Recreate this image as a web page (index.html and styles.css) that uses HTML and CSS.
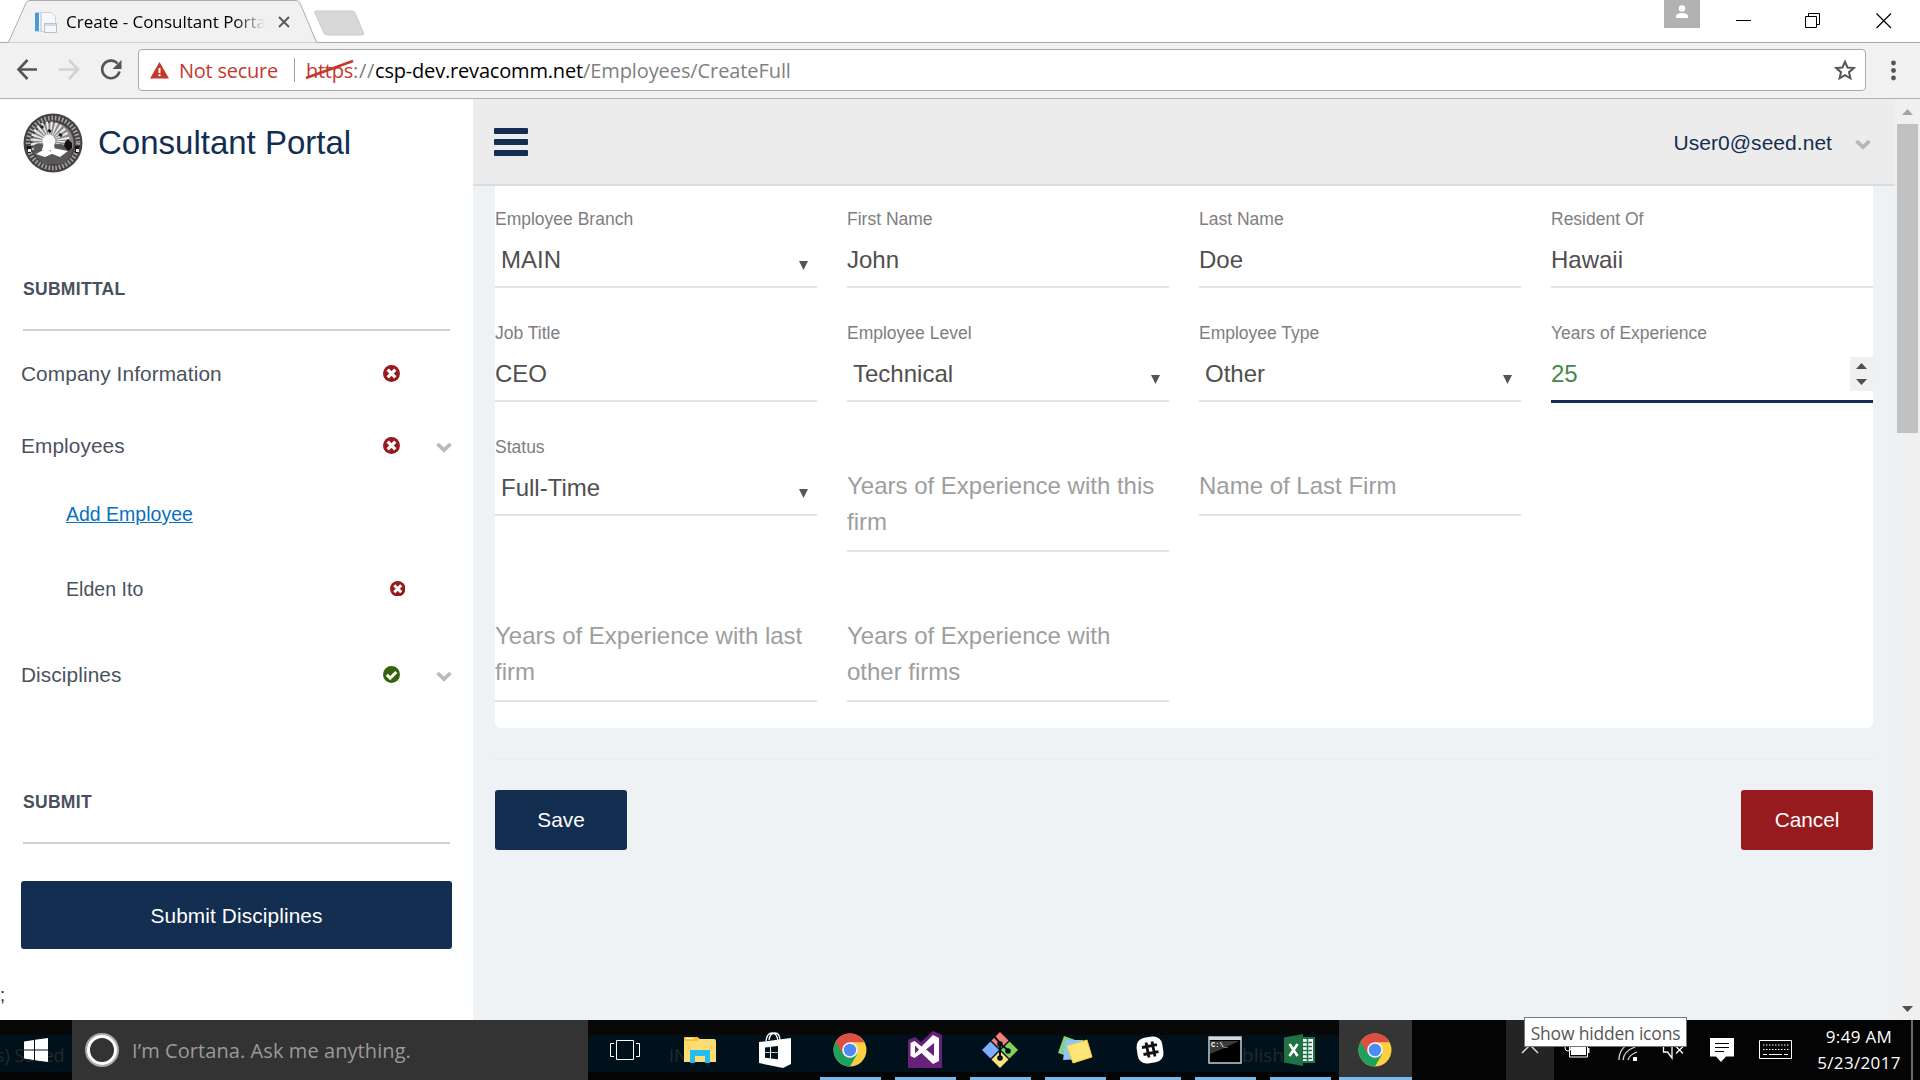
FILE: index.html
```html
<!DOCTYPE html>
<html lang="en">
<head>
<meta charset="utf-8">
<title>Create - Consultant Portal</title>
<link rel="stylesheet" href="styles.css">
</head>
<body>
<svg class="defs" aria-hidden="true">
  <symbol id="bad" viewBox="0 0 17 17"><circle cx="8.5" cy="8.5" r="8.5" fill="#971b1e"/><path d="M4.700 4.700l7.600 7.600M12.300 4.700l-7.600 7.600" stroke="#fff" stroke-width="3.300"/></symbol>
  <symbol id="good" viewBox="0 0 17 17"><circle cx="8.5" cy="8.5" r="8.5" fill="#36620c"/><path d="M3.8 8.9l3.4 3.2 6.1-6.2" fill="none" stroke="#fff" stroke-width="2.9"/></symbol>
  <symbol id="chev" viewBox="0 0 16 11"><path d="M1.5 2l6.500 6.200L14.500 2" fill="none" stroke="currentColor" stroke-width="3.8"/></symbol>
  <symbol id="arrow" viewBox="0 0 9 9"><path d="M0 0h9L4.500 9z" fill="#555"/></symbol>
  <symbol id="chrome" viewBox="0 0 34 34">
    <circle cx="17" cy="17" r="16.500" fill="#fdd044"/>
    <path d="M17 17L2.700 8.800A16.500 16.500 0 0 0 17 33.500L24.300 21z" fill="#1fa05f"/>
    <path d="M17 9.200h14.500A16.500 16.500 0 0 0 2.700 8.800L10 21z" fill="#dd4f43"/>
    <circle cx="17" cy="17" r="7.800" fill="#f4f4f4"/><circle cx="17" cy="17" r="6.200" fill="#4b8bf5"/>
  </symbol>
</svg>

<header class="tabstrip">
  <div class="tab">
    <svg class="tab-shape" width="322" height="43"><path d="M0 42.500H7Q8.500 42.500 9.500 40L26 3Q27 .5 30 .5H296Q298.500 .5 300 3L315.500 40Q316.500 42.500 318 42.500H322V43H0z" fill="#f1f1f1" stroke="#acacac"/></svg>
    <svg class="favicon" width="24" height="24"><path d="M2.500 2.500h16l4 4v15h-20z" fill="#f6f8fb" stroke="#ccd3dc"/><path d="M2 3h4v18h-4z" fill="#4a9bd4"/><path d="M8 3v18" stroke="#cbdcec" stroke-width="2"/><path d="M11.500 13.500h12v9h-12z" fill="#f5f7fa" stroke="#b6c1cf"/><path d="M12 14h11v2H12z" fill="#d3dce8"/></svg>
    <span class="tab-title">Create - Consultant Portal</span>
    <svg class="tab-close" width="12" height="12"><path d="M1 1l10 10M11 1L1 11" stroke="#5a5a5a" stroke-width="2"/></svg>
  </div>
  <svg class="newtab" width="51" height="26"><path d="M2 1h36q2 0 3 2l8.500 20q.5 2-2 2H14q-3 0-4-2L1 3q-.5-2 1-2z" fill="#d8d8d8" stroke="#c8c8c8"/></svg>
  <div class="person"><svg width="14" height="14"><circle cx="7" cy="3.500" r="3.200" fill="#fff"/><path d="M1 13V10.500Q2 8 7 8t6 2.500V13z" fill="#fff"/></svg></div>
  <svg class="winbtns" width="184" height="43"><path d="M0 20.500h15M69.500 16.500h11v11h-11zM72.500 16V13.500h11v11h-3" fill="none" stroke="#000"/><path d="M140.500 13.500l14.500 14.500M155 13.500L140.500 28" stroke="#000" stroke-width="1.200"/></svg>
</header>

<div class="toolbar">
  <svg class="nav" width="138" height="54" fill="none" stroke-width="2.600">
    <path d="M37 26.500H19M27.500 17l-9 9.500 9 9.500" stroke="#555"/>
    <path d="M59 26.500h18M69 17l9 9.500-9 9.500" stroke="#d2d2d2"/>
    <path d="M117.500 20.500a8.800 8.800 0 1 0 2 8" stroke="#555"/><path d="M121.500 17v9h-9z" fill="#555"/>
  </svg>
  <div class="omnibox">
    <svg width="19" height="17"><path d="M9.500 0L19 16.500H0z" fill="#c5392b"/><path d="M9.500 6v5M9.500 12.300v2" stroke="#fff" stroke-width="2"/></svg>
    <span class="insecure">Not secure</span>
    <span class="sep"></span>
    <span class="scheme">https<svg class="strike" width="50" height="22"><path d="M1 19L48 2" stroke="#c5392b" stroke-width="2.800"/></svg></span><span class="grey slashes">://</span><span class="host">csp-dev.revacomm.net</span><span class="grey">/Employees/CreateFull</span>
    <svg class="star" width="22" height="22"><path d="M11 2.800l2.500 5.700 6.200.6-4.700 4.100 1.400 6.100L11 16.100l-5.400 3.200L7 13.200 2.300 9.100l6.200-.6z" fill="none" stroke="#555" stroke-width="2"/></svg>
  </div>
  <svg class="menu" width="54" height="54" fill="#555"><circle cx="27.500" cy="20" r="2.400"/><circle cx="27.500" cy="27.500" r="2.400"/><circle cx="27.500" cy="35" r="2.400"/></svg>
</div>

<div class="page">
  <aside class="sidebar">
    <div class="brand">
      <svg class="seal" width="60" height="60" viewBox="0 0 60 60">
        <circle cx="30" cy="30" r="29.500" fill="#474344"/>
        <circle cx="30" cy="30" r="25" fill="none" stroke="#a5a3a3" stroke-width="4.500" stroke-dasharray="1.600 1.900"/>
        <circle cx="30" cy="30" r="20.500" fill="#8a8888"/>
        <circle cx="27" cy="28" r="13" fill="none" stroke="#e8e8e8" stroke-width="13" stroke-dasharray="1.700 1.700"/>
        <path d="M10 33q5-5 11-1l17-1 12 5q-3 12-12 15H22Q11 45 10 33z" fill="#5a5757"/>
        <circle cx="26" cy="28" r="6.500" fill="#fafafa"/>
        <path d="M21 30l10 1 1 7-13-1zM13 41l9-5 9 4-9 4zM30 35l15 3-8 6-10-4z" fill="#fff"/>
        <path d="M42 29l3-3 4 4v5l-4 3-4-5z" fill="#161214"/><path d="M18 13l2 2M25 17l3 2M36 21l3 2" stroke="#222" stroke-width="3"/>
        <path d="M3 33h5v7H5zM52 33h5l-2 7h-3z" fill="#151515"/><path d="M5 36h3v3H5zM53 36h3v3h-3z" fill="#eee"/>
      </svg>
      <span>Consultant Portal</span>
    </div>
    <h2 class="section first">SUBMITTAL</h2>
    <nav class="menu-list">
      <a class="item"><span>Company Information</span><svg class="status" width="17" height="17"><use href="#bad"/></svg></a>
      <a class="item"><span>Employees</span><svg class="status" width="17" height="17"><use href="#bad"/></svg><svg class="chev" width="16" height="11"><use href="#chev"/></svg></a>
      <a class="sub add">Add Employee</a>
      <a class="sub person-row"><span>Elden Ito</span><svg class="status" width="15.500" height="15.500"><use href="#bad"/></svg></a>
      <a class="item last"><span>Disciplines</span><svg class="status" width="17" height="17"><use href="#good"/></svg><svg class="chev" width="16" height="11"><use href="#chev"/></svg></a>
    </nav>
    <h2 class="section">SUBMIT</h2>
    <button class="submit">Submit Disciplines</button>
    <p class="stray">;</p>
  </aside>

  <main class="main">
    <div class="topbar">
      <div class="burger"><i></i><i></i><i></i></div>
      <span class="user">User0@seed.net</span>
      <svg class="chev" width="16" height="11"><use href="#chev"/></svg>
    </div>
    <form class="card">
      <div class="field select"><label>Employee Branch</label><div class="value">MAIN<svg width="9" height="9"><use href="#arrow"/></svg></div></div>
      <div class="field"><label>First Name</label><div class="value">John</div></div>
      <div class="field"><label>Last Name</label><div class="value">Doe</div></div>
      <div class="field"><label>Resident Of</label><div class="value">Hawaii</div></div>
      <div class="field"><label>Job Title</label><div class="value">CEO</div></div>
      <div class="field select"><label>Employee Level</label><div class="value">Technical<svg width="9" height="9"><use href="#arrow"/></svg></div></div>
      <div class="field select"><label>Employee Type</label><div class="value">Other<svg width="9" height="9"><use href="#arrow"/></svg></div></div>
      <div class="field focus"><label>Years of Experience</label><div class="value">25<svg class="spin" width="23" height="34"><path d="M0 0h23v34H0z" fill="#f0f0f0"/><path d="M6 12l5.500-6 5.500 6zM6 22h11l-5.500 6z" fill="#505050"/></svg></div></div>
      <div class="field select"><label>Status</label><div class="value">Full-Time<svg width="9" height="9"><use href="#arrow"/></svg></div></div>
      <div class="field empty">Years of Experience with this firm</div>
      <div class="field empty">Name of Last Firm</div>
      <div></div>
      <div class="field empty">Years of Experience with last firm</div>
      <div class="field empty">Years of Experience with other firms</div>
    </form>
    <hr class="rule">
    <div class="actions"><button class="save">Save</button><button class="cancel">Cancel</button></div>
  </main>

  <div class="scrollbar">
    <svg width="25" height="25"><path d="M7 16l5.500-6 5.500 6z" fill="#a3a3a3"/></svg>
    <div class="thumb"></div>
    <svg class="down" width="25" height="25"><path d="M7 11h11l-5.500 6z" fill="#505050"/></svg>
  </div>
</div>

<footer class="taskbar">
  <div class="backdrop"></div>
  <span class="ghost g1">s) Saved</span><span class="ghost g2">IN</span><span class="ghost g3">Publish</span>
  <div class="start"><svg width="24" height="24" fill="#fff"><path d="M0 3.500L10 2v9.500H0zM11 1.800L24 0v11.500H11zM0 12.500h10V22L0 20.500zM11 12.500h13V24l-13-1.800z"/></svg></div>
  <div class="cortana"><svg width="34" height="34"><circle cx="17" cy="17" r="15.500" fill="none" stroke="#aaa" stroke-width="3"/><circle cx="17" cy="17" r="13.500" fill="none" stroke="#fff" stroke-width="3"/></svg><span>I’m Cortana. Ask me anything.</span></div>
  <div class="apps">
    <div class="app tv"><svg width="32" height="22" fill="none" stroke="#fff"><path d="M7.500 1.500h17v19h-17zM5 4.500H1.500v13H5M27 4.500h3.500v13H27" /></svg></div>
    <div class="app"><svg width="34" height="34"><path d="M1 5q0-1 1-1h12l3 2h14q2 0 2 2v21H1z" fill="#ffdc71"/><path d="M1 5q0-1 1-1h12l2 2-2 2H1z" fill="#fbc02b"/><path d="M3 5.500h7" stroke="#fff"/><path d="M7 17h20v13h-5v-7H12v7H7z" fill="#23bdf3"/></svg></div>
    <div class="app"><svg width="34" height="38"><path d="M8 10Q9 2 14 2t6 8M11 9q1-7 6-7t5 8" fill="none" stroke="#fff" stroke-width="1.300"/><path d="M1 11l32-4v26l-8 4L1 32z" fill="#fff"/><path d="M7 16.500l5-.6v5.300H7zM13 15.800l7-.8v6.200h-7zM7 22h5v5.300l-5-.6zM13 22h7v6.200l-7-.8z" fill="#00111b"/></svg></div>
    <div class="app run"><svg width="34" height="34"><use href="#chrome"/></svg></div>
    <div class="app run"><svg width="36" height="38"><path d="M1 9l7-3 6 5L26 0l9 4v33H1z" fill="#68217a"/><path d="M3.500 12l4-2 7 5.500L26 4l6 3v23l-6 3-11.500-11L7.500 27l-4-2zM8 14.500v8l4-4zM27 12l-8 6.500 8 6.500z" fill="#fff" fill-rule="evenodd"/></svg></div>
    <div class="app run"><svg width="38" height="38"><path d="M10.500 9.500L19 1l8.500 8.500L19 18z" fill="#f98078"/><path d="M1 19l8.500-8.500L18 19l-8.500 8.500z" fill="#7eaeff"/><path d="M20 19l8.500-8.500L37 19l-8.500 8.500z" fill="#84d15c"/><path d="M10.500 28.500L19 20l8.500 8.500L19 37z" fill="#ffe27b"/><path d="M13 5l6 7v14M19 13l8 6" fill="none" stroke="#00111b" stroke-width="2"/><circle cx="19" cy="27" r="2.800" fill="#00111b"/><circle cx="27" cy="20" r="2.800" fill="#00111b"/><circle cx="19" cy="13" r="2.800" fill="#00111b"/></svg></div>
    <div class="app run"><svg width="36" height="30"><path d="M7 1l14 5-5 17L1 18z" fill="#87d186"/><path d="M9 5h17v19L6 25z" fill="#8dc6f7"/><path d="M10 11l20-6 5 17-19 6z" fill="#fde577" stroke="#f4cf45"/></svg></div>
    <div class="app run"><svg width="30" height="30"><rect x="2" y="2" width="26" height="26" rx="9" fill="#fff" transform="rotate(-8 15 15)"/><path d="M11 7.500l3 15M17 6.500l3 15M7 12.500l15-2.800M8.500 19.500l15-2.800" stroke="#111" stroke-width="2.800"/></svg></div>
    <div class="app run"><svg width="34" height="28"><path d="M1 1h32v26H1z" stroke="#c7cbd0" stroke-width="1.500"/><path d="M1 1h32v3H1z" fill="#d5dae1"/><path d="M2 5h29L16 12 2 18z" fill="#3a3a3a"/><text x="3" y="11" class="cmd">C:\_</text></svg></div>
    <div class="app run"><svg width="34" height="34"><path d="M18 5h13v24H18z" fill="#fff" stroke="#21734a" stroke-width="2"/><path d="M20 9.500h9M20 13.500h9M20 17.500h9M20 21.500h9M20 25.500h9M24.500 6v22" stroke="#21734a" stroke-width="1.500"/><path d="M1 4.500L20 1v32L1 29.500z" fill="#207245"/><path d="M6.500 11l8 12M14.500 11l-8 12" stroke="#fff" stroke-width="2.600"/></svg></div>
    <div class="app active"><svg width="34" height="34"><use href="#chrome"/></svg></div>
  </div>
  <div class="tray">
    <div class="hidden-icons"><svg width="20" height="12"><path d="M2 10l8-8 8 8" fill="none" stroke="#ddd" stroke-width="1.500"/></svg></div>
    <svg class="sys" width="160" height="60" fill="none" stroke="#fff"><path d="M15.500 20h18v17h-18z"/><path d="M17 20h15v15H17z" fill="#fff" stroke="none"/><path d="M34.500 28v5" stroke-width="2"/><circle cx="14" cy="28" r="3"/><path d="M65 40q0-13 13-17M69 40q1-9 12-13M74 40q1-5 9-8" stroke="#ddd" stroke-width="1.300"/><path d="M79 37h4v4h-4z" fill="#fff" stroke="none"/><path d="M109.500 22v10h4l4.500 6V20M122 26.500l7 7M129 26.500l-7 7" stroke-width="1.300"/></svg>
    <svg class="note" width="24" height="24"><path d="M0 0h24v18.500h-8L11 24l-5-5.500H0z" fill="#fff"/><path d="M5 5.500h14M5 9.500h14M5 13.500h9" stroke="#000"/></svg>
    <svg class="keys" width="33" height="20" fill="none" stroke="#fff"><path d="M.5 .5h32v18H.5z"/><path d="M4 5h26M4 9.500h26" stroke-dasharray="1.500 1.500"/><path d="M4 14.500h4M10 14.500h13M25 14.500h4"/></svg>
    <div class="clock"><span>9:49 AM</span><span>5/23/2017</span></div>
  </div>
  <div class="tip">Show hidden icons</div>
</footer>
</body>
</html>
```
FILE: styles.css
```css
* { box-sizing: border-box; }
body { margin: 0; width: 1920px; height: 1080px; overflow: hidden; display: flex; flex-direction: column; background: #fff; font-family: "Liberation Sans", Arial, sans-serif; color: #4a5260; }
svg { display: block; flex: none; }
.defs { position: absolute; width: 0; height: 0; }
button { border: 0; border-radius: 3px; color: #fff; font: 20.8px "Liberation Sans", Arial, sans-serif; padding: 0; }

/* Browser window */
.tabstrip, .toolbar, .tip, .taskbar { font-family: "Open Sans", "Noto Sans", sans-serif; }
.tabstrip { height: 43px; display: flex; align-items: flex-start; box-shadow: inset 0 -1px #acacac; }
.tab { position: relative; width: 322px; height: 43px; display: flex; align-items: center; padding-left: 33px; }
.tab-shape { position: absolute; left: 0; top: 0; }
.favicon, .tab-title, .tab-close { position: relative; }
.tab-title { width: 199px; margin-left: 9px; overflow: hidden; white-space: nowrap; font-size: 17px; line-height: 24px; color: #000; -webkit-mask-image: linear-gradient(90deg, #000 85%, transparent); }
.tab-close { margin-left: 13px; }
.newtab { margin: 10px 0 0 -8px; }
.person { margin-left: auto; width: 36px; height: 28px; background: #b2b2b2; display: flex; justify-content: center; padding-top: 5px; }
.winbtns { margin-left: 36px; }
.toolbar { height: 56px; background: #f1f1f1; border-bottom: 1px solid #b0b0b0; display: flex; align-items: flex-start; }
.omnibox { margin-top: 6px; width: 1728px; height: 42px; border: 1px solid #a9a9a9; border-radius: 4px; background: #fff; display: flex; align-items: center; padding: 0 9px 0 11px; font-size: 20px; line-height: 28px; white-space: nowrap; }
.omnibox span { padding-top: 1px; }
.insecure { margin-left: 10px; width: 100px; color: #c5392b; letter-spacing: -.24px; }
.sep { width: 1px; height: 24px; margin: 0 11px 0 15px; background: #a0a0a0; }
.scheme { position: relative; color: #c5392b; letter-spacing: -.26px; }
.strike { position: absolute; left: -1px; top: 3px; }
.grey { color: #808080; letter-spacing: -.09px; }
.slashes { letter-spacing: .69px; }
.host { color: #000; letter-spacing: -.18px; }
.star { margin-left: auto; }

/* Page */
.page { height: 921px; display: flex; background: #eef2f5; }
.sidebar { width: 473px; background: #fff; display: flex; flex-direction: column; }
.brand { height: 88px; display: flex; align-items: center; padding-left: 23px; gap: 15px; font-size: 33px; color: #132e50; }
.section { margin: 58px 23px 0; height: 67px; padding: 2px 0 16px; border-bottom: 2px solid #cdd0d3; display: flex; align-items: center; font-size: 17.5px; letter-spacing: .3px; font-weight: bold; color: #47505e; }
.section.first { margin-top: 77px; }
.menu-list { display: flex; flex-direction: column; margin-top: 7px; }
.item { height: 72px; display: flex; align-items: center; padding-left: 21px; font-size: 20.8px; letter-spacing: .1px; }
.item .status { margin-left: auto; margin-right: 73px; position: relative; top: -.5px; }
.item .status:not(:last-child) { margin-right: 36px; }
.item .chev { margin-right: 21px; position: relative; top: 1.5px; color: #b8bcc2; }
.item.last { height: 88px; }
.sub { padding-left: 66px; display: flex; align-items: center; font-size: 19.5px; }
.add { height: 64px; color: #0a70c0; text-decoration: underline; }
.person-row { height: 85px; letter-spacing: .05px; }
.person-row span { padding-top: 2px; }
.person-row .status { margin-left: auto; margin-right: 68px; }
.submit { margin: 37px 21px 0; padding-top: 2px; width: 431px; height: 68px; background: #132e50; letter-spacing: .12px; }
.stray { margin: 34px 0 0; font-size: 18px; line-height: 24px; color: #222; }

.main { width: 1422px; }
.topbar { height: 87px; background: #ececec; border-bottom: 2px solid #d8dde3; display: flex; align-items: center; padding: 0 24px 0 21px; }
.burger { width: 34px; display: grid; gap: 5px; }
.burger i { height: 6px; border-radius: 1px; background: #132e50; }
.user { margin-left: auto; padding-top: 2px; font-size: 21px; letter-spacing: .04px; color: #132e50; }
.topbar .chev { margin-left: 23px; position: relative; top: 3px; color: #b3b8be; }
.card { margin: 0 22px; height: 542px; background: #fff; border-radius: 0 0 6px 6px; display: grid; grid-template-columns: repeat(4, 322px); gap: 12px 30px; align-content: start; align-items: start; }
.field { height: 102px; border-bottom: 2px solid #e2e2e2; padding-top: 22px; }
.field label { display: block; width: max-content; font-size: 17.5px; line-height: 22px; color: #7e7e7e; }
.value { margin-top: 12px; height: 36px; display: flex; align-items: center; justify-content: space-between; font-size: 24px; color: #4f4f4f; }
.select .value { padding: 0 9px 0 6px; }
.value svg { position: relative; top: 5px; }
.value .spin { top: 0; }
.focus { height: 103px; margin-bottom: -1px; border-bottom: 3px solid #132e50; }
.focus .value { color: #43894a; }
.empty { height: auto; min-height: 102px; padding: 54px 0 10px; font-size: 24px; line-height: 36px; color: #9e9e9e; }
.rule { margin: 30px 22px 0; border: 0; height: 2px; background: #ebeced; }
.actions { margin: 30px 22px 0; display: flex; justify-content: space-between; }
.actions button { width: 132px; height: 60px; }
.save { background: #132e50; }
.cancel { background: #971b1e; }

.scrollbar { width: 25px; background: #f0f0f0; display: flex; flex-direction: column; }
.thumb { width: 21px; height: 309px; margin-left: 2px; background: #c1c1c1; }
.down { margin-top: auto; }

/* Windows taskbar */
.taskbar { position: relative; height: 60px; display: flex; background: #040404; }
.backdrop { position: absolute; left: 0; top: 0; width: 1356px; height: 52px; background: linear-gradient(#080808 15px, #00111b 15px); }
.ghost { position: absolute; top: 22px; font-size: 18px; line-height: 26px; color: #25292b; }
.g1 { left: -4px; }
.g2 { left: 669px; }
.g3 { left: 1204px; width: 80px; text-align: right; font-size: 19px; }
.start { position: relative; width: 72px; display: flex; align-items: center; justify-content: center; }
.cortana { position: relative; width: 516px; background: #333; display: flex; align-items: center; padding-left: 13px; gap: 13px; font-size: 20px; letter-spacing: .08px; color: #9a9a9a; }
.cortana span { padding-top: 1px; }
.apps { position: relative; display: flex; }
.app { width: 75px; height: 60px; display: flex; align-items: center; justify-content: center; padding-right: 2px; }
.run { background: linear-gradient(#76b9ed, #76b9ed) 7px bottom / 61px 3px no-repeat; }
.active { width: 73px; margin-left: 1px; background: #353535; border-bottom: 3px solid #76b9ed; padding-top: 3px; }
.cmd { font: bold 7px "Liberation Mono", monospace; fill: #fff; }
.tray { position: relative; display: flex; align-items: center; width: 507px; padding-left: 94px; }
.hidden-icons { width: 48px; height: 60px; background: #242424; display: flex; justify-content: center; padding-top: 23px; }
.note { margin: 0 0 0 -4px; }
.keys { margin-left: 25px; }
.clock { margin-left: 24px; width: 86px; display: grid; justify-items: center; font-size: 17px; line-height: 26px; letter-spacing: .34px; color: #fff; white-space: nowrap; }
.tray::after { content: ""; width: 2px; height: 60px; margin-left: auto; margin-right: 6px; background: #6a6a6a; }
.tip { position: absolute; left: 1524px; top: -3px; width: 163px; height: 30px; padding-top: 1px; border: 1px solid #767676; background: #fff; display: flex; align-items: center; justify-content: center; font-size: 17.5px; letter-spacing: -.2px; color: #575757; white-space: nowrap; }
```
